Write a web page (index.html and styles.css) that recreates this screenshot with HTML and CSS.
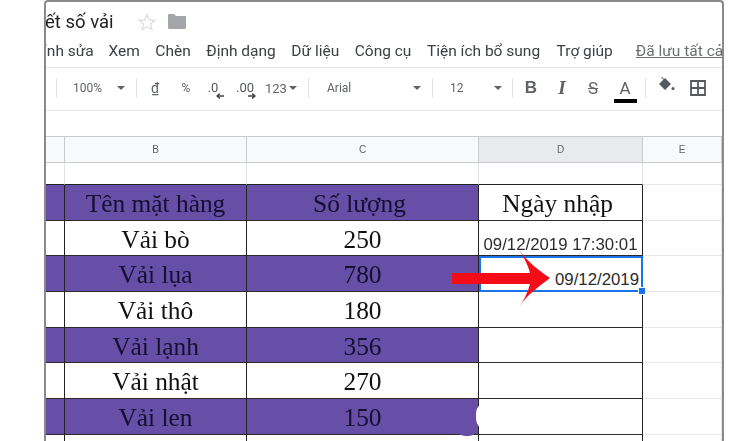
FILE: index.html
```html
<!DOCTYPE html>
<html lang="vi">
<head>
<meta charset="utf-8">
<title>Chi tiết số vải</title>
<link rel="stylesheet" href="styles.css">
</head>
<body>
<div class="window">
  <div class="titlebar">
    <span class="doc-title">ết số vải</span>
    <svg class="star" width="20" height="20" viewBox="0 0 20 20"><path d="M10 2.500l2.200 5.300 5.800.5-4.400 3.800 1.300 5.600L10 14.800l-4.900 2.900 1.300-5.600L2 8.300l5.800-.5z" fill="none" stroke="#dcddde" stroke-width="1.300"/></svg>
    <svg class="folder" width="18" height="15" viewBox="0 0 18 15"><path d="M0 1.200C0 .5.500 0 1.200 0h5l1.800 2h8.800c.7 0 1.200.5 1.200 1.200v10.600c0 .7-.5 1.200-1.200 1.200H1.200C.5 15 0 14.500 0 13.800z" fill="#a4a5a8"/></svg>
  </div>
  <div class="menubar">
    <span class="m-edit">ỉnh sửa</span>
    <span class="m-item">Xem</span>
    <span class="m-item">Chèn</span>
    <span class="m-item">Định dạng</span>
    <span class="m-item">Dữ liệu</span>
    <span class="m-item">Công cụ</span>
    <span class="m-item">Tiện ích bổ sung</span>
    <span class="m-item m-help">Trợ giúp</span>
    <span class="m-saved">Đã lưu tất cả</span>
  </div>
  <div class="toolbar">
    <div class="t-lead"></div><i class="sep"></i>
    <div class="t-zoom"><span>100%</span><b class="caret"></b></div><i class="sep"></i>
    <div class="t-btn w36 under">₫</div>
    <div class="t-btn w26">%</div>
    <div class="t-btn w28 dec">.0<svg width="8" height="6" viewBox="0 0 8 6"><path d="M8 3H1.500M3.800 .6L1 3l2.800 2.400" fill="none" stroke="#444" stroke-width="1.400"/></svg></div>
    <div class="t-btn w36 dec">.00<svg width="8" height="6" viewBox="0 0 8 6"><path d="M0 3h6.500M4.200 .6L7 3 4.200 5.400" fill="none" stroke="#444" stroke-width="1.400"/></svg></div>
    <div class="t-fmt"><span>123</span><b class="caret"></b></div><i class="sep"></i>
    <div class="t-font"><span>Arial</span><b class="caret"></b></div><i class="sep"></i>
    <div class="t-size"><span>12</span><b class="caret"></b></div><i class="sep"></i>
    <div class="t-btn w36 strong">B</div>
    <div class="t-btn w26 ital">I</div>
    <div class="t-btn w36 strike">S</div>
    <div class="t-btn w28 color">A</div>
    <i class="sep"></i>
    <div class="t-btn w38"><svg class="bucket" width="17" height="16" viewBox="0 0 17 16"><path d="M4 0l2 2 1-1 6 6-6 6-6-6 4.500-4.500-2.500-2z" fill="#55585c"/><circle cx="15" cy="11.500" r="1.500" fill="#55585c"/></svg></div>
    <div class="t-btn w28"><svg width="16" height="16" viewBox="0 0 16 16"><path d="M1 1h14v14H1zM8 1v14M1 8h14" fill="none" stroke="#55585c" stroke-width="1.800"/></svg></div>
  </div>
  <div class="formula"></div>
  <div class="sheet">
    <div class="row head"><div></div><div>B</div><div>C</div><div class="active">D</div><div>E</div></div>
    <div class="row blank"><div></div><div></div><div></div><div></div><div></div></div>
    <div class="row data purple"><div></div><div>Tên mặt hàng</div><div class="title">Số lượng</div><div class="white title">Ngày nhập</div><div></div></div>
    <div class="row data"><div></div><div>Vải bò</div><div>250</div><div class="date">09/12/2019 17:30:01</div><div></div></div>
    <div class="row data purple"><div></div><div>Vải lụa</div><div>780</div><div class="white date right selected">09/12/2019<b class="handle"></b>
      <svg class="arrow" width="100" height="58" viewBox="0 0 100 58"><path d="M0 23h78C76 15 72 7 67 0c8 11 19 20 31 28-12 9-24 18-31 29 5-7 9-15 11-23H0z" fill="#f40c17"/></svg></div><div></div></div>
    <div class="row data"><div></div><div>Vải thô</div><div>180</div><div></div><div></div></div>
    <div class="row data purple"><div></div><div>Vải lạnh</div><div>356</div><div class="white"></div><div></div></div>
    <div class="row data"><div></div><div>Vải nhật</div><div>270</div><div></div><div></div></div>
    <div class="row data purple"><div></div><div>Vải len</div><div>150</div><div class="white"><b class="smudge"></b></div><div></div></div>
    <div class="row data"><div></div><div></div><div></div><div></div><div></div></div>
  </div>
</div>
</body>
</html>
```
FILE: styles.css
```css
* { box-sizing: border-box; }
html, body { margin: 0; height: 441px; overflow: hidden; background: #fff; }
body { font-family: Roboto, "Liberation Sans", sans-serif; color: #3c4043; }
.window {
  position: relative;
  margin-left: 44px;
  width: 680px;
  height: 441px;
  border: 2px solid #8a8a8a;
  border-bottom: 0;
  border-radius: 4px 4px 0 0;
  overflow: hidden;
  filter: blur(.35px);
}
.titlebar { height: 40px; display: flex; align-items: center; }
.doc-title { font-size: 18.500px; color: #222; margin-left: -1px; width: 102px; flex: none; white-space: nowrap; }
.star { margin-left: -10px; margin-top: -1px; }
.folder { margin-left: 11px; margin-top: -1px; }
.menubar {
  height: 26px;
  border-bottom: 1px solid #e6e6e6;
  display: flex;
  align-items: center;
  font-size: 15.500px;
  white-space: nowrap;
  padding-bottom: 8px;
}
.m-edit { margin-left: -3px; width: 50px; flex: none; }
.m-item { margin-left: 15.500px; flex: none; }
.m-item.m-help { margin-left: 16.500px; }
.m-saved { margin-left: 23px; color: #6c6f73; text-decoration: underline; flex: none; }
.toolbar {
  height: 43px;
  border-bottom: 1px solid #e6e6e6;
  display: flex;
  align-items: center;
  font-size: 12px;
  color: #5f6368;
  padding-bottom: 2px;
}
.sep { width: 1px; height: 20px; background: #e2e3e4; flex: none; }
.t-lead { width: 10px; }
.t-btn { flex: none; display: flex; flex-direction: column; align-items: center; justify-content: center; height: 30px; }
.w26 { width: 26px; } .w28 { width: 28px; } .w36 { width: 36px; } .w38 { width: 38px; }
.under { text-decoration: underline; font-size: 14px; }
.dec { font-size: 13px; line-height: 13px; color: #55585c; padding-top: 3px; }
.dec svg { margin-left: 14px; margin-top: -1px; }
.caret { width: 0; height: 0; border: 4px solid transparent; border-top: 4px solid #5f6368; border-bottom: 0; flex: none; }
.t-zoom, .t-fmt, .t-font, .t-size { display: flex; align-items: center; flex: none; height: 30px; }
.t-zoom { width: 79px; padding-left: 16px; }
.t-zoom .caret { margin-left: 15px; }
.t-fmt { width: 45px; font-size: 13px; padding-left: 2px; }
.t-fmt .caret { margin-left: 2px; }
.t-font { width: 123px; padding-left: 18px; }
.t-font .caret { margin-left: 62px; }
.t-size { width: 79px; padding-left: 17px; }
.t-size .caret { margin-left: 30px; }
.strong { font: bold 17px "Liberation Sans", sans-serif; }
.ital { font: italic bold 19px "Liberation Serif", serif; }
.strike { font-size: 17px; text-decoration: line-through; }
.color { font-size: 17px; line-height: 19px; padding-top: 5px; margin-right: 6px; }
.color::after { content: ""; width: 23px; height: 4px; background: #000; margin-top: 1px; flex: none; }
.bucket { margin-top: -7px; margin-left: 3px; }
.formula { height: 25px; }
.row { display: grid; grid-template-columns: 19px 182px 232px 164px 1fr; }
.row > div { border-right: 1px solid #e2e3e3; border-bottom: 1px solid #e8e8e8; min-width: 0; }
.head { height: 27px; border-top: 1px solid #c9cbcc; }
.head > div {
  background: #f8f9fa;
  border-color: #c9cbcc;
  font: 10px/25px "Liberation Sans", sans-serif;
  color: #5f6368;
  text-align: center;
}
.head > .active { background: #e8eaed; }
.blank { height: 22px; }
.blank > div:nth-child(-n+4) { border-bottom-color: #222; }
.data { height: 35.700px; grid-template-rows: 35.700px; }
.data > div {
  font: 25.400px/37px "Liberation Serif", serif;
  color: #111;
  text-align: center;
  white-space: nowrap;
}
.data > div:nth-child(-n+4) { border-right-color: #222; border-bottom-color: #2a2a2a; }
.purple > div:nth-child(-n+3) { background: #674ea7; color: #150f30; }
.purple > div.white { background: #fff; color: #111; position: relative; }
.purple > div.title { padding-right: 6px; }
.data > div.date {
  font: 16.800px/20px "Liberation Sans", sans-serif;
  color: #2c2c2c;
  padding-top: 14px;
}
.data > .right { text-align: right; padding-right: 3px; }
.data > .selected { outline: 2px solid #1a73e8; outline-offset: -2px; }
.handle {
  position: absolute; right: -3px; bottom: -3px;
  width: 6px; height: 6px;
  background: #1a73e8;
  outline: 1px solid #fff;
}
.arrow { position: absolute; left: -27px; top: -6px; }
.smudge {
  position: absolute; left: -3px; top: 2px;
  width: 166px; height: 31px;
  background: #fff;
  border-radius: 13px 4px 4px 14px;
}
.smudge::before {
  content: "";
  position: absolute; left: -20px; top: 26px;
  width: 22px; height: 9px;
  background: #674ea7;
  border-radius: 0 0 10px 10px;
}
```
